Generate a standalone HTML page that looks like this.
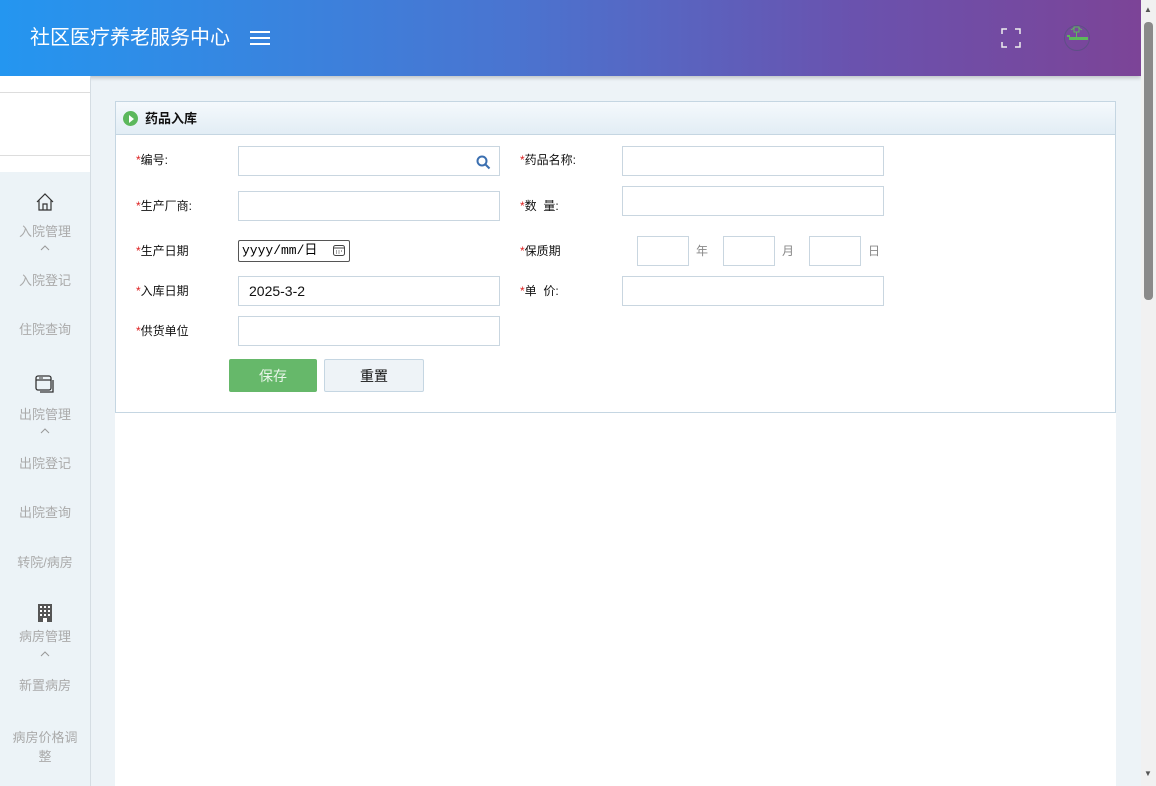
<!DOCTYPE html><html><head><meta charset="utf-8"><style>
*{margin:0;padding:0;box-sizing:border-box}
body{width:1156px;height:786px;overflow:hidden;position:relative;font-family:"Liberation Sans","Noto Sans CJK SC",sans-serif;font-size:12px;background:#edf3f7}
.a{position:absolute}
.hdr{left:0;top:0;width:1141px;height:76px;background:linear-gradient(90deg,#2496f0 0%,#4a74d0 45%,#6a52ae 75%,#7c4497 100%);box-shadow:0 2px 4px rgba(0,0,0,.2)}
.sb{left:1141px;top:0;width:15px;height:786px;background:#f1f1f1}
.lbl{color:#111;font-size:12px;line-height:14px}
.lbl b{color:#d22;font-weight:normal}
.in{border:1px solid #c9d6e0;background:#fff;height:30px}
.side{left:0;width:90px;text-align:center;color:#aaa;font-size:13px;line-height:16px}
.chev{left:40px;width:10px;height:6px}
</style></head><body>
<div class="a hdr"></div>
<div class="a" style="left:30px;top:26px;color:#fff;font-size:20px;line-height:24px">社区医疗养老服务中心</div>
<div class="a" style="left:250px;top:31px;width:20px;height:2px;background:#fff;box-shadow:0 6px 0 #fff,0 12px 0 #fff"></div>
<svg class="a" style="left:1001px;top:28px" width="20" height="20" fill="none" stroke="#eee" stroke-width="1.5"><path d="M1 6V1h5M14 1h5v5M19 14v5h-5M6 19H1v-5"/></svg>
<svg class="a" style="left:1063px;top:24px" width="28" height="28"><circle cx="14" cy="14" r="12.5" fill="none" stroke="#5e4f86" stroke-width="1"/><rect x="6" y="13" width="19" height="3" fill="#5cb85c"/><rect x="4" y="11" width="3" height="2" fill="#5cb85c"/><rect x="11" y="3" width="5" height="5" fill="none" stroke="#5cb85c"/><path d="M13.5 8v5M8 6l3-2M19 6l-3-2" stroke="#5cb85c"/></svg>
<div class="a sb"><div class="a" style="left:3px;top:22px;width:9px;height:278px;background:#8a8a8a;border-radius:4px"></div><div class="a" style="left:3px;top:5px;font-size:8px;color:#555">▲</div><div class="a" style="left:3px;top:769px;font-size:8px;color:#555">▼</div></div>
<div class="a" style="left:0;top:76px;width:90px;height:96px;background:#fff"></div>
<div class="a" style="left:0;top:92px;width:90px;height:1px;background:#ddd"></div>
<div class="a" style="left:0;top:155px;width:90px;height:1px;background:#ddd"></div>
<div class="a" style="left:0;top:172px;width:90px;height:614px;background:#ecf3f7"></div>
<div class="a" style="left:90px;top:76px;width:1px;height:710px;background:#d5dde3"></div>
<svg class="a" style="left:35px;top:192px" width="20" height="20" fill="none" stroke="#333" stroke-width="1.2"><path d="M2 10L10 2l8 8M4 8v10h12V8M8 18v-6h4v6"/></svg>
<div class="a side" style="top:224px">入院管理</div>
<svg class="a chev" style="top:245px" fill="none" stroke="#999"><path d="M1 5l4-4 4 4"/></svg>
<div class="a side" style="top:273px">入院登记</div>
<div class="a side" style="top:322px">住院查询</div>
<svg class="a" style="left:35px;top:375px" width="20" height="20" fill="none" stroke="#333" stroke-width="1.3"><rect x="1" y="1" width="15" height="14" rx="2"/><path d="M1 5h15M18 5v12H5"/><path d="M4 3h4" stroke-width="1"/></svg>
<div class="a side" style="top:407px">出院管理</div>
<svg class="a chev" style="top:428px" fill="none" stroke="#999"><path d="M1 5l4-4 4 4"/></svg>
<div class="a side" style="top:456px">出院登记</div>
<div class="a side" style="top:505px">出院查询</div>
<div class="a side" style="top:555px">转院/病房</div>
<svg class="a" style="left:37px;top:603px" width="16" height="20"><rect x="1" y="1" width="14" height="18" fill="#555"/><g fill="#fff"><rect x="3" y="3" width="2" height="2"/><rect x="7" y="3" width="2" height="2"/><rect x="11" y="3" width="2" height="2"/><rect x="3" y="7" width="2" height="2"/><rect x="7" y="7" width="2" height="2"/><rect x="11" y="7" width="2" height="2"/><rect x="3" y="11" width="2" height="2"/><rect x="7" y="11" width="2" height="2"/><rect x="11" y="11" width="2" height="2"/><rect x="6" y="15" width="4" height="4"/></g></svg>
<div class="a side" style="top:629px">病房管理</div>
<svg class="a chev" style="top:651px" fill="none" stroke="#999"><path d="M1 5l4-4 4 4"/></svg>
<div class="a side" style="top:678px">新置病房</div>
<div class="a side" style="top:728px;line-height:19px">病房价格调<br>整</div>
<div class="a" style="left:115px;top:101px;width:1001px;height:685px;background:#fff"></div>
<div class="a" style="left:115px;top:101px;width:1001px;height:312px;border:1px solid #c5d6e2;background:#fff"></div>
<div class="a" style="left:116px;top:102px;width:999px;height:33px;background:linear-gradient(#f5f9fc,#e2edf5);border-bottom:1px solid #c5d6e2"></div>
<div class="a" style="left:123px;top:111px;width:15px;height:15px;border-radius:50%;background:#5cb85c"></div>
<div class="a" style="left:129px;top:115px;width:0;height:0;border-left:5px solid #fff;border-top:4px solid transparent;border-bottom:4px solid transparent"></div>
<div class="a" style="left:145px;top:110px;font-size:13px;font-weight:bold;color:#111;line-height:18px">药品入库</div>
<div class="a lbl" style="left:136px;top:153px"><b>*</b>编号:</div>
<div class="a lbl" style="left:136px;top:199px"><b>*</b>生产厂商:</div>
<div class="a lbl" style="left:136px;top:244px"><b>*</b>生产日期</div>
<div class="a lbl" style="left:136px;top:284px"><b>*</b>入库日期</div>
<div class="a lbl" style="left:136px;top:324px"><b>*</b>供货单位</div>
<div class="a in" style="left:238px;top:146px;width:262px"></div>
<svg class="a" style="left:476px;top:155px" width="15" height="15" fill="none" stroke="#3b6fb0" stroke-width="2"><circle cx="6" cy="6" r="4.5"/><path d="M9.5 9.5l4 4"/></svg>
<div class="a in" style="left:238px;top:191px;width:262px"></div>
<div class="a" style="left:238px;top:240px;width:112px;height:22px;border:1px solid #555;border-radius:2px;font-family:'Liberation Mono','Noto Sans CJK SC',monospace;font-size:13px;line-height:18px;padding:1px 3px">yyyy/mm/日</div>
<svg class="a" style="left:333px;top:244px" width="12" height="12" fill="none" stroke="#444"><rect x="0.5" y="1.5" width="11" height="10" rx="2"/><path d="M1 4h10M3 7h1M5.5 7h1M8 7h1M3 9h1M5.5 9h1"/></svg>
<div class="a in" style="left:238px;top:276px;width:262px;font-size:14px;padding:6px 10px;color:#111;line-height:16px">2025-3-2</div>
<div class="a in" style="left:238px;top:316px;width:262px"></div>
<div class="a lbl" style="left:520px;top:153px"><b>*</b>药品名称:</div>
<div class="a lbl" style="left:520px;top:199px"><b>*</b>数&nbsp; 量:</div>
<div class="a lbl" style="left:520px;top:244px"><b>*</b>保质期</div>
<div class="a lbl" style="left:520px;top:284px"><b>*</b>单&nbsp; 价:</div>
<div class="a in" style="left:622px;top:146px;width:262px"></div>
<div class="a in" style="left:622px;top:186px;width:262px"></div>
<div class="a in" style="left:622px;top:276px;width:262px"></div>
<div class="a in" style="left:637px;top:236px;width:52px"></div>
<div class="a in" style="left:723px;top:236px;width:52px"></div>
<div class="a in" style="left:809px;top:236px;width:52px"></div>
<div class="a" style="left:696px;top:244px;color:#888;line-height:14px">年</div>
<div class="a" style="left:782px;top:244px;color:#888;line-height:14px">月</div>
<div class="a" style="left:868px;top:244px;color:#888;line-height:14px">日</div>
<div class="a" style="left:229px;top:359px;width:88px;height:33px;background:#66b86a;border-radius:2px;color:#e8f5e8;font-size:14px;text-align:center;line-height:34px">保存</div>
<div class="a" style="left:324px;top:359px;width:100px;height:33px;background:#eef3f7;border:1px solid #c5d6e2;border-radius:2px;color:#111;font-size:14px;text-align:center;line-height:32px">重置</div>
</body></html>
